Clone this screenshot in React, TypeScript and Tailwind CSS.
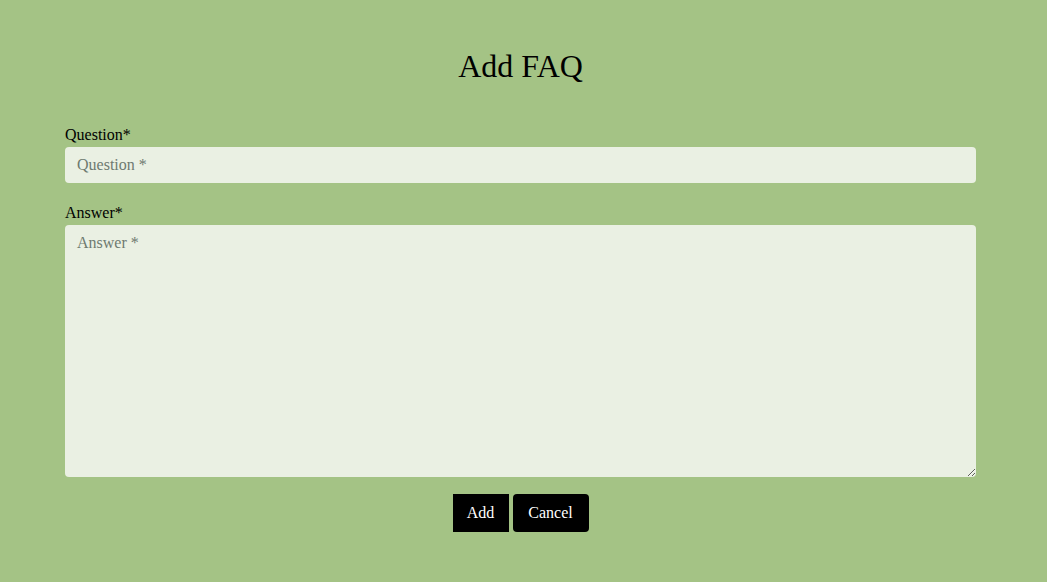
import React from "react";

export default function App() {
  const font = { fontFamily: '"Liberation Serif", "DejaVu Serif", serif' };
  return (
    <div className="min-h-[582px] w-full bg-[#a4c385] text-black" style={font}>
      <div className="ml-[65px] w-[911px] pt-[48px]">
        <h1 className="text-center text-[32px] leading-[36px] font-normal">Add FAQ</h1>
        <div className="mt-[39px]">
          <label className="block text-[16px] leading-6">Question*</label>
          <input
            type="text"
            placeholder="Question *"
            className="block h-[36px] w-full rounded-[4px] bg-[#eaf0e3] px-3 text-[16px] text-black outline-none placeholder:text-[#6e7a70]"
            style={font}
          />
        </div>
        <div className="mt-[18px]">
          <label className="block text-[16px] leading-6">Answer*</label>
          <textarea
            placeholder="Answer *"
            className="block h-[252px] w-full rounded-[4px] bg-[#eaf0e3] px-3 py-[6px] text-[16px] leading-6 text-black outline-none placeholder:text-[#6e7a70]"
            style={font}
          />
        </div>
        <div className="mt-[17px] flex justify-center gap-[4px]">
          <button className="h-[38px] w-[56px] bg-black text-[16px] text-white" style={font}>
            Add
          </button>
          <button className="h-[38px] w-[76px] rounded-[4px] bg-black text-[16px] text-white" style={font}>
            Cancel
          </button>
        </div>
      </div>
    </div>
  );
}
